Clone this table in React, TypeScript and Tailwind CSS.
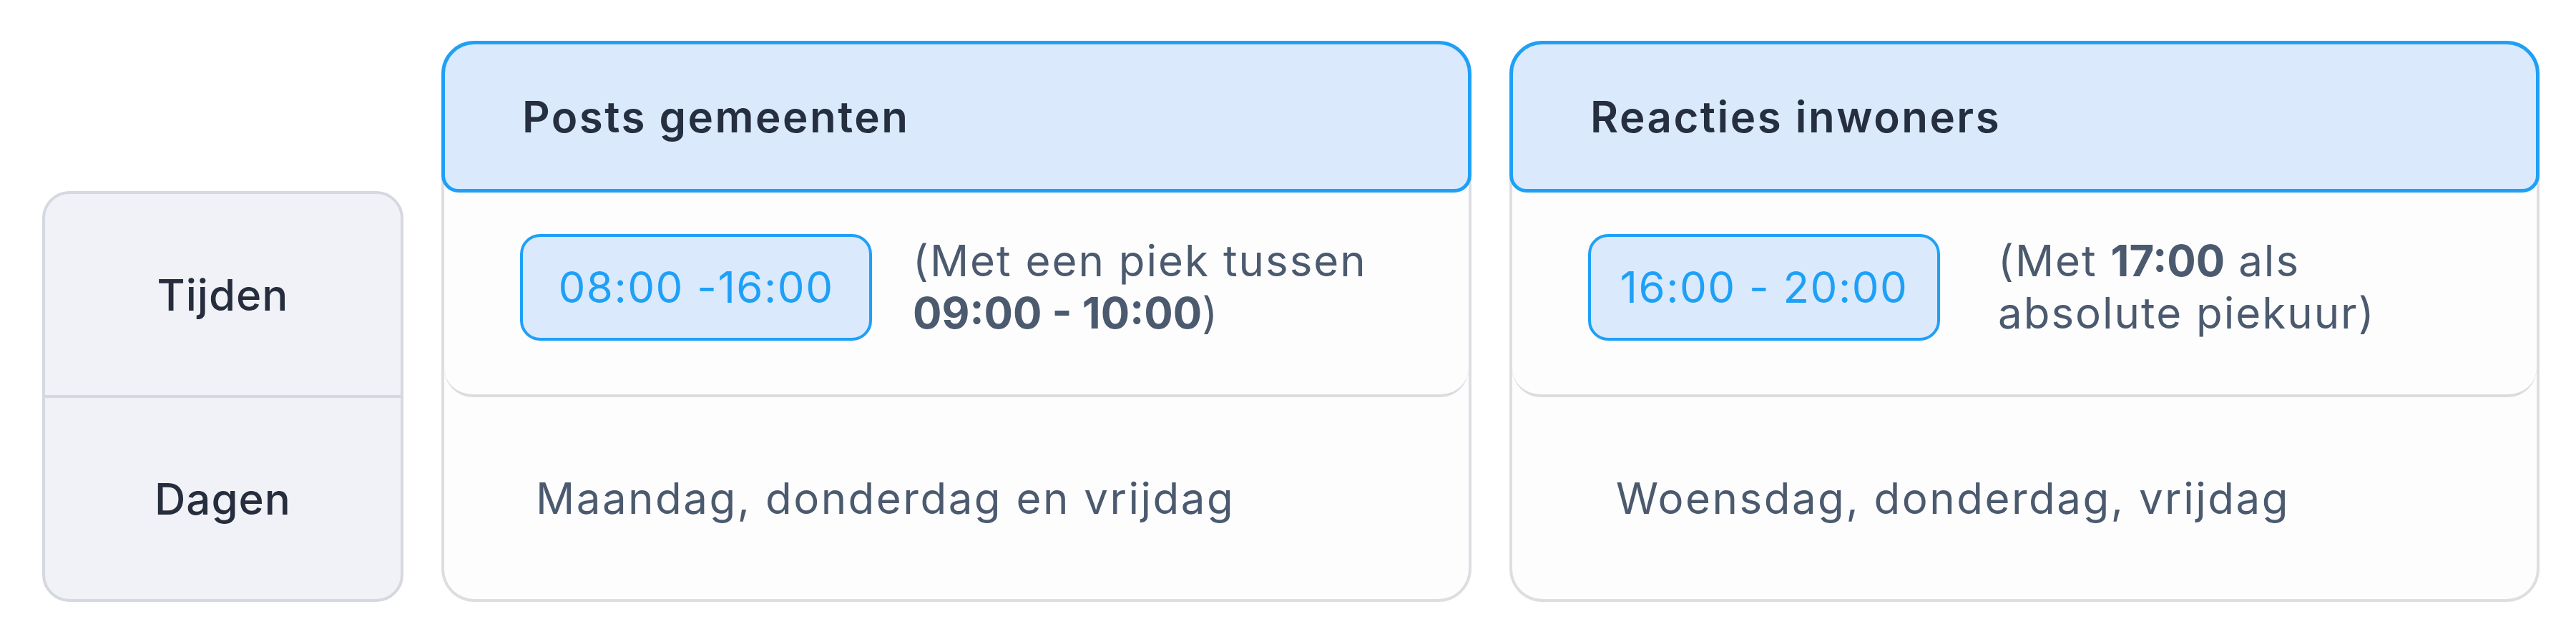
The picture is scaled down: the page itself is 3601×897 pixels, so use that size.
import React from 'react'

const font = { fontFamily: 'Inter, "Noto Sans", sans-serif' }

const LabelBox = () => {
    return (
        <div className="w-[505px] h-[574px] flex flex-col rounded-[38px] border-[4px] border-[#d6d8df] bg-[#f0f2f7] overflow-hidden">
            <div className="flex-1 flex items-center justify-center border-b-[4px] border-[#d6d8df]">
                <p className="text-[60px] font-medium tracking-[1px] text-[#262d3d]">Tijden</p>
            </div>
            <div className="flex-1 flex items-center justify-center">
                <p className="text-[60px] font-medium tracking-[1px] text-[#262d3d]">Dagen</p>
            </div>
        </div>
    )
}

type CardProps = {
    title: string
    time: string
    note: React.ReactNode
    days: string
    notePl: string
    daysPl: string
}

const Card = ({ title, time, note, days, notePl, daysPl }: CardProps) => {
    return (
        <div className="w-[1440px] flex flex-col">
            <div className="relative z-10 h-[212px] flex items-center pl-[108px] rounded-t-[46px] rounded-b-[24px] border-[5px] border-[#1fa0f7] bg-[#dae9fc]">
                <h2 className="text-[60px] font-semibold text-[#252f3f] tracking-[2.5px]">{title}</h2>
            </div>
            <div className="-mt-[30px] pt-[30px] flex flex-col rounded-b-[46px] border-x-[4px] border-b-[4px] border-[#dedee2] bg-[#fdfdfe]">
                <div className="h-[286px] flex items-center pl-[106px] rounded-b-[40px] border-b-[4px] border-[#dcdce0] pb-[18px]">
                    <div className="h-[149px] w-[492px] flex items-center justify-center rounded-[28px] border-[4px] border-[#1fa0f7] bg-[#dae9fc]">
                        <span className="text-[60px] tracking-[1.5px] text-[#1fa0f7]">{time}</span>
                    </div>
                    <p className={`${notePl} text-[60px] leading-[73px] tracking-[2px] text-[#4b5a6e]`}>{note}</p>
                </div>
                <div className={`h-[282px] flex items-center ${daysPl}`}>
                    <p className="text-[60px] tracking-[2.5px] text-[#4b5a6e]">{days}</p>
                </div>
            </div>
        </div>
    )
}

export default function App() {
    return (
        <div className="w-[3601px] h-[897px] bg-white flex items-end gap-[53px] pl-[59px] pt-[57px] pb-[56px]" style={font}>
            <LabelBox />
            <Card
                title="Posts gemeenten"
                time="08:00 -16:00"
                notePl="pl-[57px]"
                daysPl="pl-[128px]"
                note={<>(Met een piek tussen<br /><b className="font-bold tracking-normal">09:00 - 10:00</b>)</>}
                days="Maandag, donderdag en vrijdag"
            />
            <Card
                title="Reacties inwoners"
                time="16:00 - 20:00"
                notePl="pl-[81px]"
                daysPl="pl-[145px]"
                note={<>(Met <b className="font-bold tracking-normal">17:00</b> als<br />absolute piekuur)</>}
                days="Woensdag, donderdag, vrijdag"
            />
        </div>
    )
}
